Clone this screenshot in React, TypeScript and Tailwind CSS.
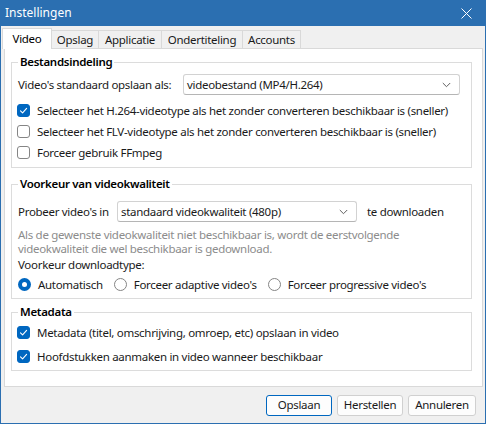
import React, { useState } from "react";

function CheckBox({ checked, label, onToggle }: { checked: boolean; label: string; onToggle: () => void }) {
    return (
        <div className="flex items-center h-[21px] cursor-default" onClick={onToggle}>
            <div
                className={`w-[13px] h-[13px] rounded-[3px] flex items-center justify-center shrink-0 ${
                    checked ? "bg-[#0067c0] border border-[#0067c0]" : "bg-white border border-[#858585]"
                }`}
            >
                {checked && (
                    <svg width="11" height="11" viewBox="0 0 11 11" fill="none">
                        <path d="M2.5 5.8 L4.6 7.8 L8.6 3.4" stroke="white" strokeWidth="1.1" strokeLinecap="round" strokeLinejoin="round" />
                    </svg>
                )}
            </div>
            <span className="ml-[7px] whitespace-nowrap">{label}</span>
        </div>
    );
}

function Radio({ checked, label, onSelect }: { checked: boolean; label: string; onSelect: () => void }) {
    return (
        <div className="flex items-center cursor-default" onClick={onSelect}>
            {checked ? (
                <div className="w-[13px] h-[13px] rounded-full bg-[#0067c0] flex items-center justify-center shrink-0">
                    <div className="w-[5px] h-[5px] rounded-full bg-white" />
                </div>
            ) : (
                <div className="w-[13px] h-[13px] rounded-full border border-[#858585] bg-white shrink-0" />
            )}
            <span className="ml-[7px] whitespace-nowrap">{label}</span>
        </div>
    );
}

function Combo({ value, width }: { value: string; width: string }) {
    return (
        <div className={`${width} h-[21px] bg-white border border-[#d2d2d2] border-b-[#b5b5b5] rounded-[3px] flex items-center justify-between pl-[3px] pr-[8px]`}>
            <span className="whitespace-nowrap">{value}</span>
            <svg width="9" height="6" viewBox="0 0 9 6" fill="none">
                <path d="M0.8 1 L4.5 4.7 L8.2 1" stroke="#5f5f5f" strokeWidth="1" />
            </svg>
        </div>
    );
}

function Group({ title, children, className = "" }: { title: string; children: React.ReactNode; className?: string }) {
    return (
        <fieldset className={`border border-[#dcdcdc] px-[5px] ${className}`}>
            <legend className="ml-[1px] px-[2px] font-semibold leading-[16px] text-black">{title}</legend>
            {children}
        </fieldset>
    );
}

const tabs = [
    { name: "Video", w: "w-[50px]" },
    { name: "Opslag", w: "w-[47px]" },
    { name: "Applicatie", w: "w-[63px]" },
    { name: "Ondertiteling", w: "w-[81px]" },
    { name: "Accounts", w: "w-[58px]" },
];

export default function App() {
    const [activeTab, setActiveTab] = useState("Video");
    const [h264, setH264] = useState(true);
    const [flv, setFlv] = useState(false);
    const [ffmpeg, setFfmpeg] = useState(false);
    const [downloadType, setDownloadType] = useState("auto");
    const [metadata, setMetadata] = useState(true);
    const [chapters, setChapters] = useState(true);

    return (
        <div className="w-[486px] h-[424px] flex flex-col bg-[#f0f0f0] border border-t-0 border-[#2b6fb1] font-['Segoe_UI','Noto_Sans',sans-serif] text-[11.5px] tracking-[-0.3px] leading-[16px] text-[#1a1a1a] overflow-hidden">
            {/* titelbalk */}
            <div className="h-[26px] shrink-0 bg-[#2b6fb1] flex items-center justify-between pl-[4px] pr-[13px] text-white text-[12px] tracking-normal">
                <span>Instellingen</span>
                <svg width="11" height="11" viewBox="0 0 11 11" fill="none">
                    <path d="M0.5 0.5 L10.5 10.5 M10.5 0.5 L0.5 10.5" stroke="white" strokeWidth="1" />
                </svg>
            </div>

            {/* tabs */}
            <div className="flex items-end h-[21px] mt-[1px] ml-[1px] relative z-10">
                {tabs.map(tab =>
                    tab.name === activeTab ? (
                        <div
                            key={tab.name}
                            className={`${tab.w} h-[21px] bg-white border border-b-0 border-[#d9d9d9] flex items-center justify-center -mb-px pb-[1px] text-black`}
                        >
                            {tab.name}
                        </div>
                    ) : (
                        <div
                            key={tab.name}
                            className={`${tab.w} h-[18px] bg-[#f0f0f0] border border-b-0 border-l-0 border-[#d9d9d9] flex items-center justify-center cursor-default`}
                            onClick={() => setActiveTab(tab.name)}
                        >
                            {tab.name}
                        </div>
                    )
                )}
            </div>

            {/* paneel */}
            <div className="h-[339px] ml-[3px] mr-[2px] bg-white border border-[#d9d9d9] pt-[5px] pl-[6px] pr-[10px] flex flex-col">
                <Group title="Bestandsindeling" className="pb-[4px]">
                    <div className="flex items-center mt-[4px] ml-[1px]">
                        <span className="w-[165px] whitespace-nowrap">Video's standaard opslaan als:</span>
                        <Combo value="videobestand (MP4/H.264)" width="w-[277px]" />
                    </div>
                    <div className="mt-[5px]">
                        <CheckBox
                            checked={h264}
                            onToggle={() => setH264(!h264)}
                            label="Selecteer het H.264-videotype als het zonder converteren beschikbaar is (sneller)"
                        />
                        <CheckBox
                            checked={flv}
                            onToggle={() => setFlv(!flv)}
                            label="Selecteer het FLV-videotype als het zonder converteren beschikbaar is (sneller)"
                        />
                        <CheckBox checked={ffmpeg} onToggle={() => setFfmpeg(!ffmpeg)} label="Forceer gebruik FFmpeg" />
                    </div>
                </Group>

                <Group title="Voorkeur van videokwaliteit" className="mt-[8px] pb-[3px]">
                    <div className="flex items-center mt-[9px] ml-[1px]">
                        <span className="w-[99px] whitespace-nowrap">Probeer video's in</span>
                        <Combo value="standaard videokwaliteit (480p)" width="w-[240px]" />
                        <span className="ml-[10px]">te downloaden</span>
                    </div>
                    <p className="mt-[6px] ml-[1px] text-[#8c8c8c] leading-[14px]">
                        Als de gewenste videokwaliteit niet beschikbaar is, wordt de eerstvolgende
                        <br />
                        videokwaliteit die wel beschikbaar is gedownload.
                    </p>
                    <p className="mt-[1px] ml-[1px]">Voorkeur downloadtype:</p>
                    <div className="flex items-center gap-[11px] h-[21px] mt-[1px] ml-[1px]">
                        <Radio checked={downloadType === "auto"} onSelect={() => setDownloadType("auto")} label="Automatisch" />
                        <Radio checked={downloadType === "adaptive"} onSelect={() => setDownloadType("adaptive")} label="Forceer adaptive video's" />
                        <Radio checked={downloadType === "progressive"} onSelect={() => setDownloadType("progressive")} label="Forceer progressive video's" />
                    </div>
                </Group>

                <Group title="Metadata" className="mt-[5px] pb-[3px]">
                    <div className="mt-[2px] flex flex-col gap-[3px]">
                        <CheckBox
                            checked={metadata}
                            onToggle={() => setMetadata(!metadata)}
                            label="Metadata (titel, omschrijving, omroep, etc) opslaan in video"
                        />
                        <CheckBox
                            checked={chapters}
                            onToggle={() => setChapters(!chapters)}
                            label="Hoofdstukken aanmaken in video wanneer beschikbaar"
                        />
                    </div>
                </Group>
            </div>

            {/* knoppen */}
            <div className="flex-1 flex items-center justify-end gap-[5px] pr-[9px]">
                <button className="w-[66px] h-[21px] bg-[#fdfdfd] border border-[#0067c0] rounded-[3px] text-[#1a1a1a]">Opslaan</button>
                <button className="w-[66px] h-[21px] bg-[#fdfdfd] border border-[#d0d0d0] rounded-[3px] text-[#1a1a1a]">Herstellen</button>
                <button className="w-[68px] h-[21px] bg-[#fdfdfd] border border-[#d0d0d0] rounded-[3px] text-[#1a1a1a]">Annuleren</button>
            </div>
        </div>
    );
}
